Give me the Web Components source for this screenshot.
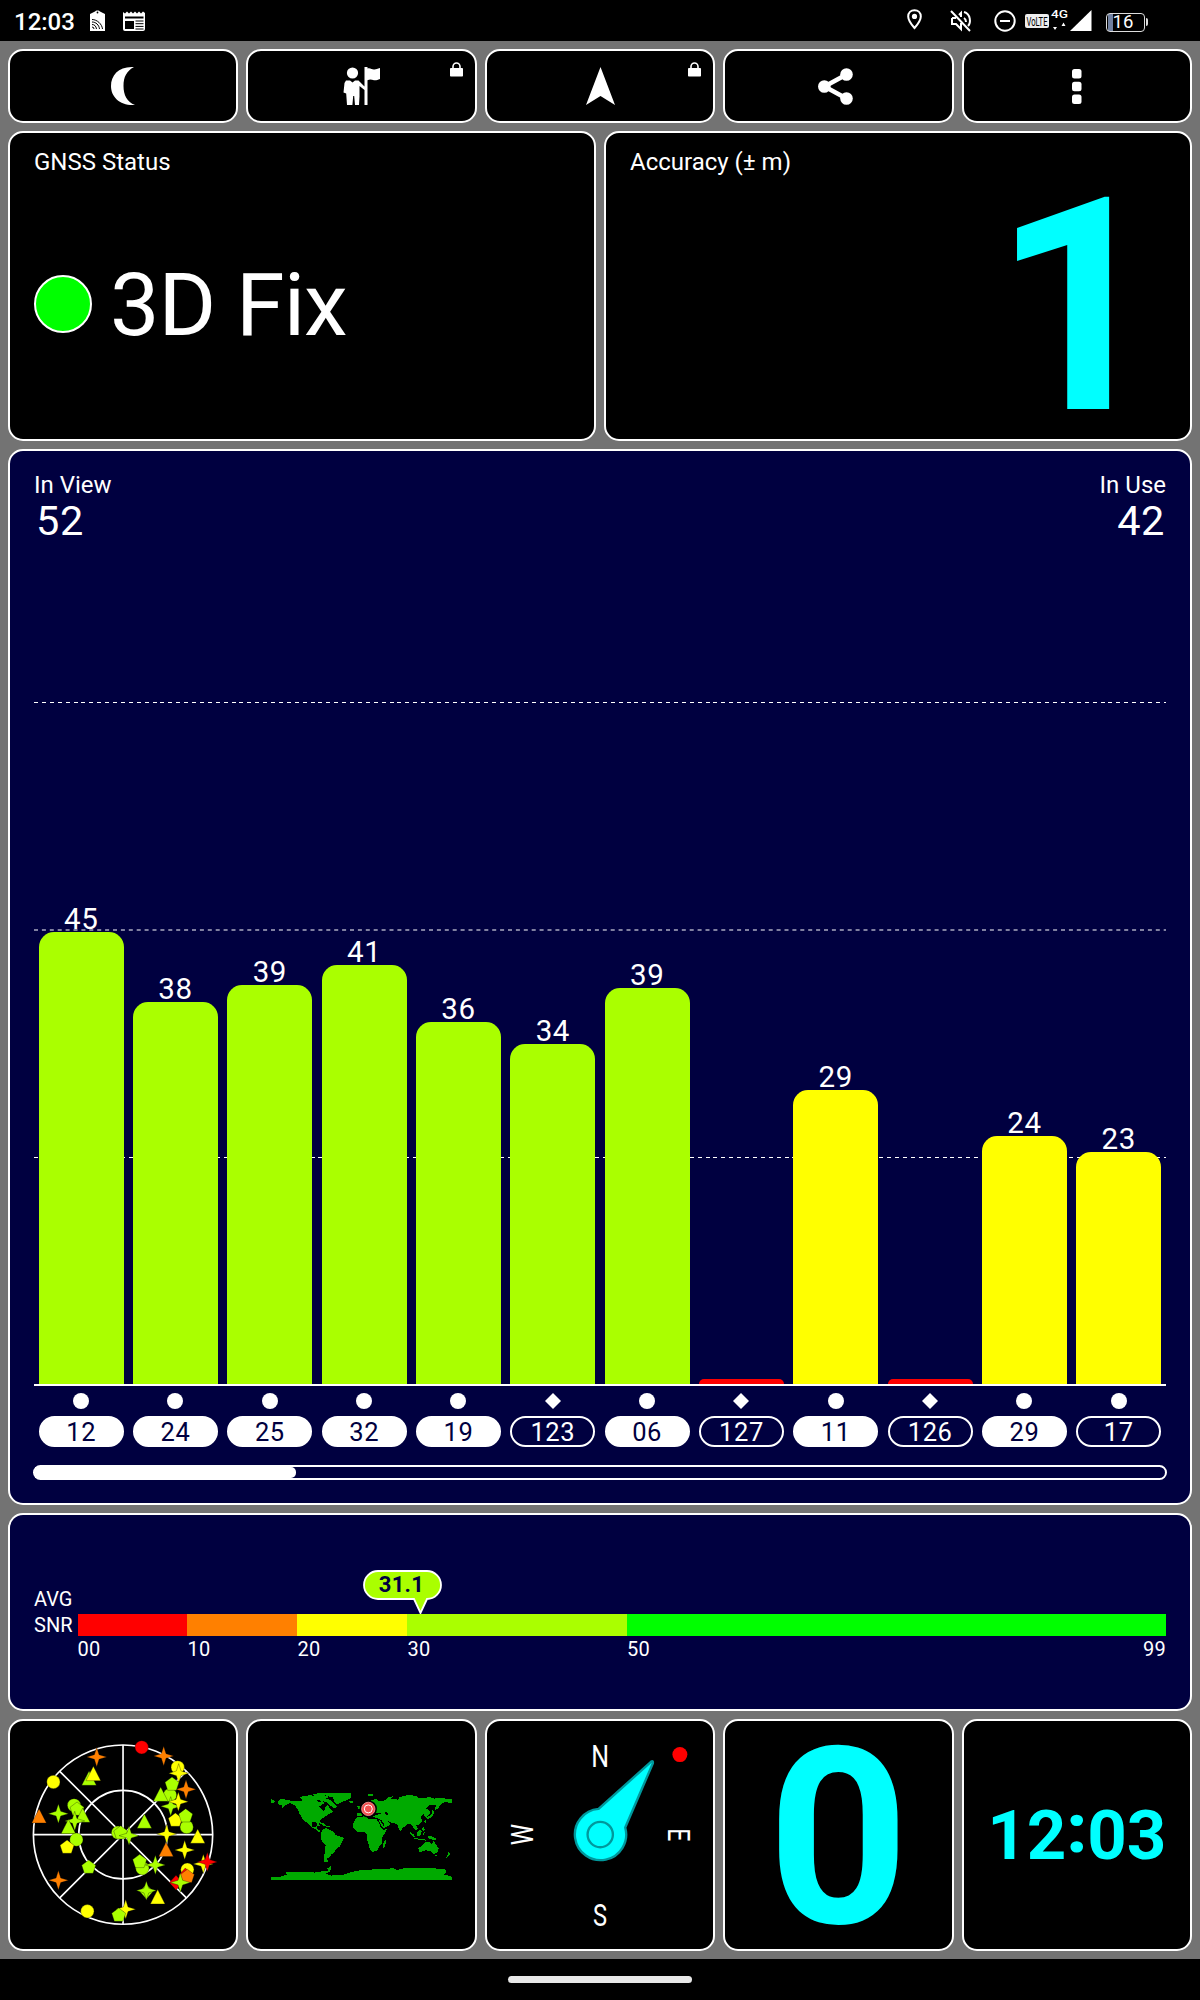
<!DOCTYPE html>
<html lang="en">
<head>
<meta charset="utf-8">
<title>GPS Status</title>
<style>
    body        { margin: 0; width: 1200px; height: 2000px; background: #000; color: #fff; font-family: Roboto, "Liberation Sans", sans-serif; overflow: hidden;
                  display: flex; flex-direction: column }
    main        { box-sizing: border-box; height: 1918px; padding: 8px; background: #737373; display: grid; gap: 8px;
                  grid-template-rows: 74px 309.6px 1056px 198.8px 231.6px }
    .row        { display: flex; gap: 8px; min-height: 0 }
    .row > *    { flex: 1 1 0; min-width: 0 }
    footer      { flex: 1; display: flex; justify-content: center; align-items: center }
    footer i    { width: 184px; height: 7px; border-radius: 4px; background: #e8e8e8 }
</style>
</head>
<body>
<status-bar time="12:03" battery="16"></status-bar>
<main>
    <div class="row">
        <tool-button icon="moon"></tool-button>
        <tool-button icon="guide" locked></tool-button>
        <tool-button icon="arrow" locked></tool-button>
        <tool-button icon="share"></tool-button>
        <tool-button icon="more"></tool-button>
    </div>
    <div class="row">
        <info-panel label="GNSS Status"><fix-status>3D Fix</fix-status></info-panel>
        <info-panel label="Accuracy (± m)"><big-value class="accuracy" size="298" align="flex-end">1</big-value></info-panel>
    </div>
    <signal-chart view="52" use="42"></signal-chart>
    <snr-scale value="31.1"></snr-scale>
    <div class="row">
        <info-panel bare><sky-plot></sky-plot></info-panel>
        <info-panel bare><world-map></world-map></info-panel>
        <info-panel bare><compass-dial></compass-dial></info-panel>
        <info-panel bare><big-value class="speed" size="246" align="center">0</big-value></info-panel>
        <info-panel bare><big-value size="69" align="center">12<b>:</b>03</big-value></info-panel>
    </div>
</main>
<footer><i></i></footer>

<script>
const LIME = '#af0', YELLOW = '#ff0', ORANGE = '#ff8000', RED = '#f00', GREEN = '#0f0'

const PANEL = `
    :host       { box-sizing: border-box; display: flex; flex-direction: column; border: 2px solid #fff; border-radius: 15px; background: #000; color: #fff }
`

const ICONS = {
    moon: [25, 38, `<path d="M23 0C8-1 0 8 0 19s9 20 24 19C16 35 12.500 28 12.500 19S15.500 4 23 0z"/>`],
    guide: [38, 38, `<circle cx="9.500" cy="6" r="5.600"/><path d="M3 13.500h4l2.500 2 2.500-2h3.500l6 6V0h3v1.500c3-1 4.500 1.500 7 1 1.500 0 3-.8 5.500-1.500v11c-2.500 1-4 1.500-6 1.200-2.500-.6-4-1.200-6.500 0V38h-3V23l-5-4v10.500l-.5 8.500h-4l-.8-9h-1l-.8 9H4l-.8-11.500-2.700-1L1.500 16z"/>`],
    arrow: [29, 38, `<path d="M14.500 0L29 38l-14.500-9L0 38z"/>`],
    // trailing space keeps the glyph left of centre
    share: [40, 37, `<path d="M28.500 6.500L6.500 18.500l22 12" fill="none" stroke="#fff" stroke-width="4.500"/><circle cx="28.500" cy="6.500" r="6.300"/><circle cx="6.300" cy="18.500" r="6.300"/><circle cx="28.500" cy="30.500" r="6.300"/>`],
    more: [10, 35, `<rect width="9.500" height="9.500" rx="2.500"/><rect y="12.700" width="9.500" height="9.500" rx="2.500"/><rect y="25.400" width="9.500" height="9.500" rx="2.500"/>`],
    lock: [13, 15, `<path d="M3 6V4.500a3.500 3.500 0 017 0V6" fill="none" stroke="#fff" stroke-width="1.600"/><rect y="6" width="13" height="8.500" rx=".8"/>`],
    tag: [15, 21, `<path d="M0 4l5-2.500C5.500 0 9.500 0 10 1.500L15 4v17H0z"/><circle cx="7.500" cy="2.500" r=".9" fill="#000"/><g fill="none" stroke="#000" stroke-width="1"><path d="M2 9.500c5 0 10 4.500 10.500 9.500M2 12c4 0 7 3 7.500 7M2 14.500c2.500 0 4 1.500 4.500 4.500M2 17q2 0 2 2"/></g>`],
    news: [23, 20, `<path d="M0 1l2 1.500L4 .5l2 2 2-2 2 2 2-2 2 2 2-2 2 2 2-2 2 1.500V18q0 2-2 2H2q-2 0-2-2z"/><path d="M2 5.500h18.500v2H2zM2 10h9v8H2z" fill="#000"/><path d="M12.500 10h8M12.500 12.700h8M12.500 15.400h8M12.500 18h8" stroke="#000" stroke-width="1"/>`],
    pin: [15, 21, `<path d="M7.500 1.200c3.700 0 6.300 2.700 6.300 6.200 0 4.300-6.300 11.600-6.300 11.600S1.200 11.700 1.200 7.400c0-3.500 2.600-6.200 6.300-6.200z" fill="none" stroke="#fff" stroke-width="2"/><circle cx="7.500" cy="7.400" r="2.600"/>`],
    mute: [21, 22, `<g fill="none" stroke="#fff" stroke-width="2"><path d="M1 1l19 20M2 8v6h4l5 5v-6M2 8h4M9 5l2-2v4M14 8q2 1.200 2 4M14 2c7 2 7 11 4 14"/></g>`],
    dnd: [22, 22, `<circle cx="11" cy="11" r="9.700" fill="none" stroke="#fff" stroke-width="2"/><path d="M6 10h10v2H6z"/>`],
    volte: [24, 14, `<rect width="24" height="14" rx="2" fill="#eee"/><text x="12" y="11.500" text-anchor="middle" textLength="21" lengthAdjust="spacingAndGlyphs" font-size="12" fill="#000">VoLTE</text>`],
    data: [18, 22, `<text x="0" y="8.600" font-size="10.500" font-weight="500" textLength="17" lengthAdjust="spacingAndGlyphs" fill="#fff">4G</text><path d="M2 18h4l-2 3zM10.500 17h4l-2-3.500z"/>`],
    cell: [22, 21, `<path d="M21.500 0v21H0z"/>`]
}

class AppIcon extends HTMLElement
{
    connectedCallback() {
        const [w, h, body] = ICONS[this.getAttribute('name')]
        this.attachShadow({ mode: 'open' }).innerHTML = `
            <style>
                :host   { display: block; flex: none }
                svg     { display: block; fill: #fff; overflow: visible; font-family: Roboto, sans-serif }
            </style>
            <svg width="${w}" height="${h}" viewBox="0 0 ${w} ${h}">${body}</svg>
        `
    }
}

class StatusBar extends HTMLElement
{
    connectedCallback() {
        this.attachShadow({ mode: 'open' }).innerHTML = `
            <style>
                :host       { box-sizing: border-box; height: 41px; padding: 0 51px 0 14px; background: #000; display: flex; align-items: center; flex: none }
                .time       { width: 75.500px; font-size: 24px; font-weight: 500; line-height: 28px; margin-top: 3px }
                .gap        { flex: 1 }
                .tag        { margin-right: 18px }
                .pin        { margin-right: 28px }
                .mute       { margin-right: 23px }
                .dnd        { margin-right: 9px }
                .volte      { margin-right: 1.500px }
                .data       { margin-right: 1.500px }
                .cell       { margin-right: 14px }
                .pin, .data { position: relative; top: -1px }
                .battery    { position: relative; box-sizing: border-box; width: 39px; height: 19px; border: 1.5px solid #ddd; border-radius: 4px; margin: 3px 4px 0 0;
                              background: linear-gradient(90deg, #7080a0 5px, transparent 5px) 1px 0 no-repeat; text-align: center; font-size: 18.500px; line-height: 17px; padding-right: 5px }
                .battery::after { content: ""; position: absolute; right: -4px; top: 4px; width: 2px; height: 8px; border-radius: 0 3px 3px 0; background: #ddd }
            </style>
            <span class="time">${this.getAttribute('time')}</span>
            <app-icon class="tag" name="tag"></app-icon>
            <app-icon name="news"></app-icon>
            <span class="gap"></span>
            <app-icon class="pin" name="pin"></app-icon>
            <app-icon class="mute" name="mute"></app-icon>
            <app-icon class="dnd" name="dnd"></app-icon>
            <app-icon class="volte" name="volte"></app-icon>
            <app-icon class="data" name="data"></app-icon>
            <app-icon class="cell" name="cell"></app-icon>
            <span class="battery">${this.getAttribute('battery')}</span>
        `
    }
}

class ToolButton extends HTMLElement
{
    connectedCallback() {
        this.attachShadow({ mode: 'open' }).innerHTML = `
            <style>
                ${PANEL}
                :host   { position: relative; align-items: center; justify-content: center; cursor: pointer }
                .lock   { position: absolute; top: 11px; right: 12px }
            </style>
            <app-icon name="${this.getAttribute('icon')}"></app-icon>
            ${this.hasAttribute('locked') ? '<app-icon class="lock" name="lock"></app-icon>' : ''}
        `
    }
}

class InfoPanel extends HTMLElement
{
    connectedCallback() {
        this.attachShadow({ mode: 'open' }).innerHTML = `
            <style>
                ${PANEL}
                :host               { padding: 15px 24px 6px }
                :host([bare])       { padding: 0 }
                :host([bare]) .label { display: none }
                .label              { font-size: 24px; line-height: 28px }
                .body               { flex: 1; min-height: 0; display: flex; flex-direction: column; justify-content: center }
            </style>
            <div class="label">${this.getAttribute('label') || ''}</div>
            <div class="body"><slot></slot></div>
        `
    }
}

class FixStatus extends HTMLElement
{
    connectedCallback() {
        this.attachShadow({ mode: 'open' }).innerHTML = `
            <style>
                :host   { display: flex; align-items: center; gap: 18px; font-size: 88px; line-height: 100px; letter-spacing: -1px; padding-top: 1px }
                i       { box-sizing: border-box; width: 58px; height: 58px; margin-bottom: 2px; border: 2px solid #fff; border-radius: 50%; background: ${GREEN} }
            </style>
            <i></i><span><slot></slot></span>
        `
    }
}

class BigValue extends HTMLElement
{
    connectedCallback() {
        this.attachShadow({ mode: 'open' }).innerHTML = `
            <style>
                :host               { display: flex; justify-content: ${this.getAttribute('align')}; color: #0ff; font-weight: 700; font-size: ${this.getAttribute('size')}px; line-height: 1 }
                :host(.accuracy)    { line-height: 240px; padding: 7px 2.500px 0 0 }
                :host(.speed)       { line-height: 220px; padding-top: 7px }
                ::slotted(b)        { line-height: 0; vertical-align: 7px }
            </style>
            <span><slot></slot></span>
        `
    }
}

class SatBar extends HTMLElement
{
    connectedCallback() {
        const { prn, snr, height, color, used, shape } = this.sat
        this.attachShadow({ mode: 'open' }).innerHTML = `
            <style>
                :host   { position: relative; flex: 1 1 0; display: flex; flex-direction: column; align-items: center }
                .plot   { flex: 1; align-self: stretch; border-bottom: 2px solid #fff; padding: 0 4.670px; display: flex; flex-direction: column; justify-content: flex-end; text-align: center }
                .snr    { font-size: 29.500px; letter-spacing: .6px; line-height: 26px }
                .bar    { height: ${height}px; background: ${color}; border-radius: 15px 15px 0 0 }
                svg     { display: block; margin: 7px 0; fill: #fff }
                .prn    { box-sizing: border-box; width: 85px; height: 31px; border: 2px solid #fff; border-radius: 16px; text-align: center; font-size: 25.500px; letter-spacing: .6px; line-height: 28px }
                .used   { background: #fff; color: #000040 }
            </style>
            <div class="plot"><span class="snr">${snr || ''}</span><div class="bar"></div></div>
            <svg width="16" height="16">${shape === 'diamond' ? '<path d="M8 0l8 8-8 8-8-8z"/>' : '<circle cx="8" cy="8" r="8"/>'}</svg>
            <div class="prn ${used ? 'used' : ''}">${prn}</div>
        `
    }
}

const SATS = [
    { prn: '12', snr: 45, height: 451.7, color: LIME, used: true },
    { prn: '24', snr: 38, height: 382.3, color: LIME, used: true },
    { prn: '25', snr: 39, height: 399.3, color: LIME, used: true },
    { prn: '32', snr: 41, height: 418.7, color: LIME, used: true },
    { prn: '19', snr: 36, height: 362.3, color: LIME, used: true },
    { prn: '123', snr: 34, height: 340, color: LIME, shape: 'diamond' },
    { prn: '06', snr: 39, height: 396, color: LIME, used: true },
    { prn: '127', height: 5, color: RED, shape: 'diamond' },
    { prn: '11', snr: 29, height: 294, color: YELLOW, used: true },
    { prn: '126', height: 5, color: RED, shape: 'diamond' },
    { prn: '29', snr: 24, height: 248, color: YELLOW, used: true },
    { prn: '17', snr: 23, height: 232, color: YELLOW }
]

class SignalChart extends HTMLElement
{
    connectedCallback() {
        const root = this.attachShadow({ mode: 'open' })
        root.innerHTML = `
            <style>
                ${PANEL}
                :host       { padding: 20.400px 24px 0; background: #000040 }
                .head       { display: flex; justify-content: space-between; font-size: 24px; line-height: 28px; height: 71px }
                .head div   { display: flex; flex-direction: column }
                .head b     { font-weight: 400; font-size: 41.500px; line-height: 44px; letter-spacing: .6px; padding: 0 1px 0 2px }
                .use        { text-align: right }
                .columns    { position: relative; display: flex; height: 905px }
                .grid       { position: absolute; left: 0; top: 0; width: 100%; height: 100%; stroke: #fff; stroke-dasharray: 4 3.900 }
                .thin       { shape-rendering: crispEdges }
                .thick      { stroke-width: 2; stroke-opacity: .5 }
                .scroll     { box-sizing: border-box; height: 15px; margin: 18px -1px 0; border: 2px solid #fff; border-radius: 8px }
                .scroll i   { display: block; width: 261px; height: 11px; border-radius: 0 5px 5px 0; background: #fff }
            </style>
            <div class="head">
                <div>In View<b>${this.getAttribute('view')}</b></div>
                <div class="use">In Use<b>${this.getAttribute('use')}</b></div>
            </div>
            <div class="columns">
                <svg class="grid">
                    <path class="thin" d="M0 160.500H1132M0 615.500H1132"/>
                    <path class="thick" d="M0 388H1132"/>
                </svg>
            </div>
            <div class="scroll"><i></i></div>
        `

        const columns = root.querySelector('.columns')
        SATS.forEach(sat => {
            const bar = document.createElement('sat-bar')
            bar.sat = sat
            columns.appendChild(bar)
        })
    }
}

class SnrScale extends HTMLElement
{
    connectedCallback() {
        this.attachShadow({ mode: 'open' }).innerHTML = `
            <style>
                ${PANEL}
                :host           { flex-direction: row; align-items: flex-start; padding: 72.500px 24px 0; background: #000040; font-size: 20px; line-height: 25.700px }
                .label          { width: 43.500px; white-space: nowrap }
                .scale          { position: relative; flex: 1; margin-top: 27.200px }
                .colors, .ticks { display: grid; grid-template-columns: 110fr 110fr 110fr 219.600fr 539fr }
                .colors i       { height: 21.500px }
                .ticks          { line-height: 24px; padding-top: 1px }
                .ticks span     { display: flex; justify-content: space-between; letter-spacing: .2px }
                .ticks em       { font-style: normal }
                .badge          { position: absolute; left: 285px; top: -44px; width: 80px; height: 44px; color: #000040; font-size: 22px; font-weight: 700; line-height: 30px; text-align: center }
                .badge svg      { position: absolute; left: 0; top: 0 }
                .badge span     { position: relative; left: -1px; letter-spacing: .3px }
            </style>
            <div class="label">AVG<br>SNR</div>
            <div class="scale">
                <div class="colors">${[RED, ORANGE, YELLOW, LIME, GREEN].map(c => `<i style="background: ${c}"></i>`).join('')}</div>
                <div class="ticks"><span>00</span><span>10</span><span>20</span><span>30</span><span>50 <em>99</em></span></div>
                <div class="badge">
                    <svg width="80" height="44"><path d="M15 1h49a14 14 0 010 28l-6.500 14L51 29H15a14 14 0 010-28z" fill="${LIME}" stroke="#fff" stroke-width="1.800"/></svg>
                    <span>${this.getAttribute('value')}</span>
                </div>
            </div>
        `
    }
}

// satellite markers: c circle, p pentagon, t triangle, s star, d diamond
const MARKERS = {
    c: '<circle r="20"/>',
    p: '<path d="M0-21L21-5 13 19H-13L-21-5z"/>',
    t: '<path d="M0-24L22 19H-22z"/>',
    s: '<path d="M0-29L7-7 30 0 7 7 0 29-7 7-30 0-7-7z"/>',
    d: '<path d="M0-22L20 0 0 22-20 0z"/>'
}

const SKY = [
    ['c', 395, 83, RED], ['s', 461, 109, ORANGE], ['s', 260, 112, ORANGE], ['c', 503, 143, YELLOW], ['s', 506, 161, YELLOW],
    ['t', 237, 178, LIME], ['t', 250, 164, YELLOW], ['c', 130, 187, YELLOW], ['s', 528, 209, ORANGE],
    ['c', 480, 226, LIME], ['p', 486, 193, LIME], ['t', 452, 226, LIME], ['s', 482, 260, LIME], ['s', 505, 246, YELLOW],
    ['c', 192, 257, LIME], ['p', 201, 268, LIME], ['t', 218, 289, LIME], ['s', 194, 304, LIME], ['t', 175, 323, LIME],
    ['s', 145, 282, LIME], ['t', 87, 291, ORANGE], ['t', 403, 307, LIME], ['p', 496, 301, YELLOW],
    ['c', 530, 322, LIME], ['p', 527, 288, LIME], ['c', 199, 360, LIME], ['p', 171, 382, YELLOW],
    ['c', 324, 339, LIME], ['p', 332, 339, LIME], ['s', 357, 348, LIME], ['s', 470, 343, YELLOW], ['t', 563, 352, YELLOW],
    ['t', 468, 392, ORANGE], ['s', 524, 391, YELLOW], ['p', 236, 442, LIME], ['c', 397, 446, LIME], ['p', 389, 425, LIME],
    ['s', 436, 436, LIME], ['s', 580, 433, YELLOW], ['s', 592, 427, RED], ['c', 532, 450, YELLOW], ['d', 498, 489, RED],
    ['d', 526, 467, RED], ['p', 532, 470, ORANGE], ['s', 511, 489, LIME], ['s', 145, 482, ORANGE], ['d', 409, 516, LIME], ['s', 409, 513, LIME],
    ['t', 443, 534, YELLOW], ['s', 347, 569, YELLOW], ['c', 232, 575, YELLOW], ['p', 326, 586, LIME]
]

class SkyPlot extends HTMLElement
{
    connectedCallback() {
        this.attachShadow({ mode: 'open' }).innerHTML = `
            <style>
                :host, svg  { display: block; width: 100%; height: 100% }
                .axes       { fill: none; stroke: #fff; stroke-width: 5 }
                .sats       { stroke: #000; stroke-opacity: .45; stroke-width: 2 }
            </style>
            <svg viewBox="0 4 679 683">
                <g class="axes">
                    <circle cx="339" cy="345" r="269"/><circle cx="339" cy="345" r="133"/>
                    <path d="M339 76V614M70 345H608M149 155L529 535M529 155L149 535"/>
                </g>
                <g class="sats">${SKY.map(([type, x, y, color]) => `<g transform="translate(${x} ${y})" fill="${color}">${MARKERS[type]}</g>`).join('')}</g>
            </svg>
        `
    }
}

class WorldMap extends HTMLElement
{
    connectedCallback() {
        this.attachShadow({ mode: 'open' }).innerHTML = `
            <style>
                :host, svg  { display: block; width: 100%; height: 100% }
                .land       { fill: #0a0; shape-rendering: crispEdges }
            </style>
            <svg viewBox="-4.800 -145.800 679 683">
                <g class="land">
                    <path d="M84 96L92 89 110 90 132 95 150 94 168 91 178 95 200 94 213 98 219 92 225 101 215 106 208 112 217 119 224 125 226 112 235 107 242 118 252 127 243 131 232 137 222 144 213 151 208 160 210 169 204 169 200 158 186 159 186 170 193 174 201 170 202 178 212 184 209 188 196 178 184 172 174 161 165 155 157 145 149 132 145 119 135 108 121 101 108 106 96 116 98 108 87 105z"/>
                    <path d="M63 88l14 6-4 5H63zM150 84l12-5 20-2 18 3 20-3 20 5-10 5 14 5 10 10 8 10-8 4-14-10-10-8-22-6-26 4-22-4zM190 73l40-4 15 1-20 8-30 2z"/>
                    <path d="M203 73L235 70 304 70 304 84 292 92 276 97 264 105 254 96 250 84 230 78zM298 95l12-1 3 4-12 3zM352 75l20-1-4 5-12-1z"/>
                    <path d="M207 158l14 2 8 8 12 3-2 3-14-4-12-7z"/>
                    <path d="M214 190L219 180 229 176 240 180 252 187 258 197 273 201 283 206 276 218 271 231 260 238 254 249 245 254 240 263 232 267 236 277 226 279 222 271 225 252 228 227 217 214 213 203z"/>
                    <path d="M322 143L345 140 356 147 379 147 387 158 394 175 400 181 412 179 407 190 397 204 398 219 389 230 384 242 369 248 361 241 356 221 351 207 352 194 345 187 327 188 316 181 309 171 312 158zM403 216l7-6-3 19-6 7-2-8z"/>
                    <path d="M321 138V129L335 130 337 120 350 112 355 100 365 92 379 88 391 96 409 91 414 84 432 80 424 88 444 90 450 83 478 75 502 81 510 86 540 83 554 87 573 86 606 88V100L586 98 574 104 564 119 555 121 560 107 540 106 529 117 541 124 539 136 526 144 522 134 513 141 518 154 511 164 500 167 505 178 498 181 492 177 487 166 478 162 467 169 457 178 454 186 446 176 443 164 428 160 414 154 423 163 412 172 400 176 389 156 387 147 371 142 369 135 362 139 350 132 335 139z"/>
                    <path d="M325 107l5 4 3 7-10 1 3-5-4-3zM480 185l12 10 5 10-8-5-9-10zM500 190l10-10 6 6-4 13-8 2zM492 205l20 3 16 2v3l-34-5zM516 180l5-10 5 10-5 5zM519 190l7-2-4 10zM535 199l12 1 14 8-7 4-12-4-8-4zM524 155l5-5-1 10zM527 143l14-4 8-12-3-10 8 10-5 13-14 9z"/>
                    <path d="M506 235L518 228 526 219 538 216 546 225 552 213 559 225 567 237 564 248 553 253 542 245 530 242 509 248zM556 256l6 1-3 5zM596 247l8 6-10 10-6 3 5-8z"/>
                    <path d="M63 321L95 321 111 315 108 309 145 306 196 309 218 305 235 303 233 296 246 289 241 306 228 313 245 318 282 315 311 306 333 302 362 300 396 299 430 296 443 301 470 294 515 295 550 296 586 299 590 306 583 315 606 321V330H63z"/>
                </g>
                <g fill="#000" shape-rendering="crispEdges"><path d="M368 130l8 2 16-3 2 4-14 3-10 4zM406 128l7-3 2 13-6-2zM388 149l14 20 3-2-10-16zM360 104l4 12 10-3-3-5z"/></g>
                <circle cx="356" cy="118" r="26"/>
                <circle cx="356" cy="118" r="20" fill="#f05050" stroke="#f99" stroke-width="2.500"/>
                <circle cx="356" cy="118" r="12" fill="none" stroke="#fff" stroke-width="3"/>
            </svg>
        `
    }
}

class CompassDial extends HTMLElement
{
    connectedCallback() {
        this.attachShadow({ mode: 'open' }).innerHTML = `
            <style>
                :host, svg  { display: block; width: 100%; height: 100% }
                text        { fill: #fff; font-size: 96px; text-anchor: middle }
                .needle     { fill: #0ff; stroke: #00989c; stroke-width: 7; stroke-linejoin: round }
            </style>
            <svg viewBox="20.400 34.200 679 683">
                <g transform="translate(360 375)">
                    <text transform="translate(0 -204) scale(.78 1)">N</text>
                    <text transform="rotate(90) translate(1 -204) scale(.72 1)">E</text>
                    <text transform="translate(-1 273) scale(.74 1)">S</text>
                    <text transform="rotate(-90) translate(0 -202) scale(.75 1)">W</text>
                </g>
                <path class="needle" d="M355 298L513 156Q519 152 518 161L435 354A77 77 0 11355 298z"/>
                <circle class="needle" cx="360" cy="375" r="38"/>
                <circle cx="599" cy="135" r="22.500" fill="#f00"/>
            </svg>
        `
    }
}

customElements.define('app-icon', AppIcon)
customElements.define('status-bar', StatusBar)
customElements.define('tool-button', ToolButton)
customElements.define('info-panel', InfoPanel)
customElements.define('fix-status', FixStatus)
customElements.define('big-value', BigValue)
customElements.define('sat-bar', SatBar)
customElements.define('signal-chart', SignalChart)
customElements.define('snr-scale', SnrScale)
customElements.define('sky-plot', SkyPlot)
customElements.define('world-map', WorldMap)
customElements.define('compass-dial', CompassDial)
</script>
</body>
</html>
